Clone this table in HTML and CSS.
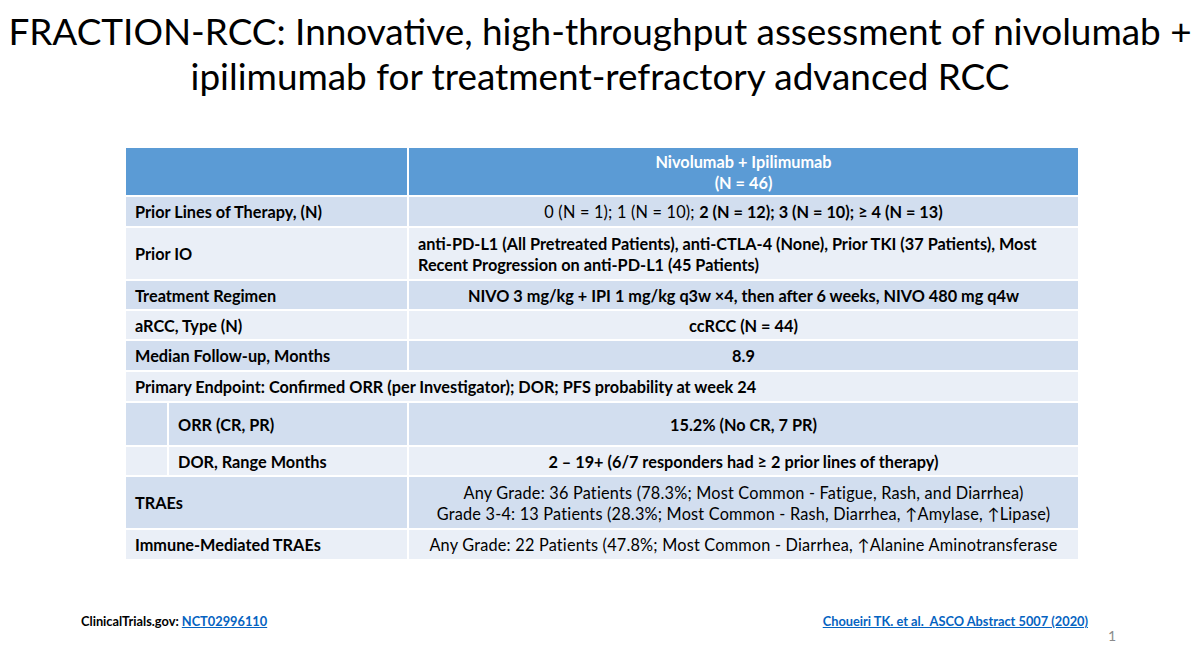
FILE: index.html
```html
<!DOCTYPE html>
<html>
<head>
<meta charset="utf-8">
<link rel="stylesheet" href="styles.css">
</head>
<body>
<div class="slide">
  <h1 class="title">FRACTION-RCC: Innovative, high-throughput assessment of nivolumab +<br>ipilimumab for treatment-refractory advanced RCC</h1>
  <div class="table-wrap">
    <table class="data">
      <colgroup>
        <col class="c-indent">
        <col class="c-label">
        <col class="c-value">
      </colgroup>
      <thead>
        <tr class="h-head">
          <th colspan="2"></th>
          <th>Nivolumab + Ipilimumab<br>(N = 46)</th>
        </tr>
      </thead>
      <tbody>
        <tr class="dark h-31">
          <td colspan="2" class="lbl">Prior Lines of Therapy, (N)</td>
          <td class="val center reg">0 (N = 1); 1 (N = 10); <b>2 (N = 12); 3 (N = 10); ≥ 4 (N = 13)</b></td>
        </tr>
        <tr class="light h-52">
          <td colspan="2" class="lbl">Prior IO</td>
          <td class="val bold">anti-PD-L1 (All Pretreated Patients), anti-CTLA-4 (None), Prior TKI (37 Patients), Most Recent Progression on anti-PD-L1 (45 Patients)</td>
        </tr>
        <tr class="dark h-29">
          <td colspan="2" class="lbl">Treatment Regimen</td>
          <td class="val center bold">NIVO 3 mg/kg + IPI 1 mg/kg q3w ×4, then after 6 weeks, NIVO 480 mg q4w</td>
        </tr>
        <tr class="light h-29">
          <td colspan="2" class="lbl">aRCC, Type (N)</td>
          <td class="val center bold">ccRCC (N = 44)</td>
        </tr>
        <tr class="dark h-31">
          <td colspan="2" class="lbl">Median Follow-up, Months</td>
          <td class="val center bold">8.9</td>
        </tr>
        <tr class="light h-31">
          <td colspan="3" class="lbl">Primary Endpoint: Confirmed ORR (per Investigator); DOR; PFS probability at week 24</td>
        </tr>
        <tr class="dark h-44">
          <td class="indent"></td>
          <td class="lbl">ORR (CR, PR)</td>
          <td class="val center bold">15.2% (No CR, 7 PR)</td>
        </tr>
        <tr class="light h-29">
          <td class="indent"></td>
          <td class="lbl">DOR, Range Months</td>
          <td class="val center bold">2 – 19+ (6/7 responders had ≥ 2 prior lines of therapy)</td>
        </tr>
        <tr class="dark h-52">
          <td colspan="2" class="lbl">TRAEs</td>
          <td class="val center reg">Any Grade: 36 Patients (78.3%; Most Common - Fatigue, Rash, and Diarrhea)<br>Grade 3-4: 13 Patients (28.3%; Most Common - Rash, Diarrhea, ↑Amylase, ↑Lipase)</td>
        </tr>
        <tr class="light h-31">
          <td colspan="2" class="lbl">Immune-Mediated TRAEs</td>
          <td class="val center reg">Any Grade: 22 Patients (47.8%; Most Common - Diarrhea, ↑Alanine Aminotransferase</td>
        </tr>
      </tbody>
    </table>
  </div>
  <div class="footer">
    <div class="ref-left">ClinicalTrials.gov: <a href="#" class="link">NCT02996110</a></div>
    <div class="ref-right"><a href="#" class="link">Choueiri TK. et al.&nbsp; ASCO Abstract 5007 (2020)</a></div>
  </div>
  <div class="page-num">1</div>
</div>
</body>
</html>
```

FILE: styles.css
```css
html, body {
  margin: 0;
  padding: 0;
  background: #ffffff;
}

body {
  font-family: Lato, "Open Sans", "Liberation Sans", sans-serif;
  color: #000000;
}

.slide {
  width: 1200px;
  height: 661px;
  position: relative;
  overflow: hidden;
}

.title {
  margin: 0;
  padding-top: 9px;
  font-weight: 400;
  font-size: 36.9px;
  line-height: 45px;
  text-align: center;
  white-space: nowrap;
}

.table-wrap {
  display: flex;
  padding-left: 124px;
  margin-top: 47px;
}

.data {
  border-collapse: collapse;
  table-layout: fixed;
  width: 954px;
  font-size: 16.3px;
  line-height: 21px;
}

.c-indent { width: 43px; }
.c-label { width: 240px; }
.c-value { width: 671px; }

.data th,
.data td {
  border: 2px solid #ffffff;
  padding: 0 9px;
  vertical-align: middle;
}

.data th {
  background: #5b9bd5;
  color: #ffffff;
  font-weight: 700;
  text-align: center;
}

.h-head { height: 49px; }
.h-29 { height: 30px; }
.h-31 { height: 31px; }
.h-44 { height: 44px; }
.h-52 { height: 53px; }

.dark td { background: #d2deef; }
.light td { background: #eaeff7; }

.lbl {
  font-weight: 700;
  white-space: nowrap;
}

.indent {
  padding: 0;
}

.val.center { text-align: center; }
.bold { font-weight: 700; }
.reg { letter-spacing: 0.2px; }
.reg b { letter-spacing: 0; }

.footer {
  display: flex;
  justify-content: space-between;
  padding: 52px 112px 0 81px;
  font-size: 12.8px;
  font-weight: 700;
}

.link {
  color: #0563c1;
  text-decoration: underline;
}

.page-num {
  position: absolute;
  left: 1108px;
  top: 627px;
  font-size: 14px;
  color: #8b8b8b;
}
```
